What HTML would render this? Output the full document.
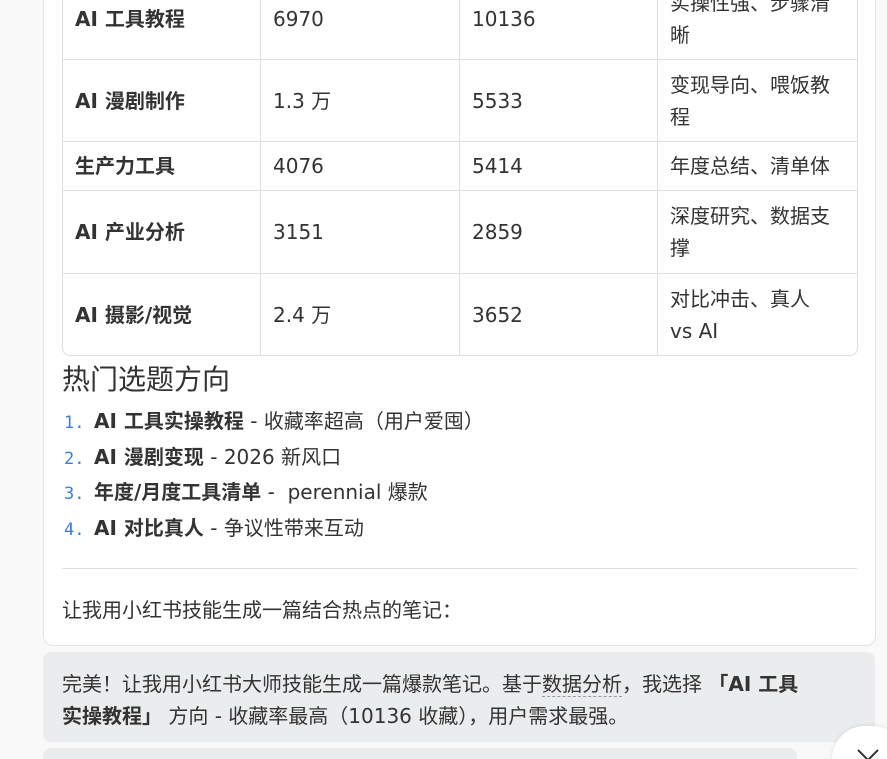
<!DOCTYPE html>
<html><head><meta charset="utf-8"><style>
*{margin:0;padding:0;box-sizing:border-box}
html,body{width:887px;height:759px;overflow:hidden}
body{background:#f9f9fa;font-family:"DejaVu Sans","Noto Sans CJK SC",sans-serif;color:#333;position:relative}
.card{position:absolute;left:43px;top:-20px;width:833px;height:666px;background:#fff;border:1px solid #e3e3e3;border-radius:0 0 10px 10px}
table{position:absolute;left:62px;top:-23px;border-collapse:separate;border-spacing:0;border:1px solid #dedede;border-radius:0 0 8px 8px;font-size:20px}
td{border-right:1px solid #dedede;border-bottom:1px solid #dedede;padding:0 12px;vertical-align:middle;line-height:32px;white-space:nowrap}
td:last-child{border-right:none}
tr:last-child td{border-bottom:none}
td.b{font-weight:bold}
h3{position:absolute;left:62px;top:362px;font-size:28px;font-weight:normal;line-height:36px}
ol{position:absolute;left:64px;top:404px;list-style:none;font-size:20px}
ol li{height:35.5px;line-height:35px;white-space:nowrap}
ol .n{font-family:"DejaVu Sans Mono",monospace;color:#3b7ddd;font-size:17px;display:inline-block;width:30px}
hr{position:absolute;left:62px;top:568px;width:795px;border:none;border-top:1px solid #e0e0e0}
.p{position:absolute;left:62px;top:594px;font-size:20px}
.g{position:absolute;left:43px;top:652px;width:832px;height:90px;background:#ebecee;border-radius:8px;padding:16px 19px;font-size:20px;line-height:32px;white-space:nowrap}
.g2{position:absolute;left:43px;top:748px;width:754px;height:11px;background:#ebecee;border-radius:8px 8px 0 0}
.c{position:absolute;left:832px;top:726px;width:74px;height:33px;border-radius:37px 37px 0 0;background:#fff;box-shadow:0 0 4px rgba(0,0,0,.12);overflow:hidden}
</style></head><body>
<div class="card"></div>
<table>
<tr style="height:82px"><td class="b" style="width:198px">AI 工具教程</td><td style="width:199px">6970</td><td style="width:198px">10136</td><td style="width:199px">实操性强、步骤清<br>晰</td></tr>
<tr style="height:82px"><td class="b">AI 漫剧制作</td><td>1.3 万</td><td>5533</td><td>变现导向、喂饭教<br>程</td></tr>
<tr style="height:49px"><td class="b">生产力工具</td><td>4076</td><td>5414</td><td>年度总结、清单体</td></tr>
<tr style="height:83px"><td class="b">AI 产业分析</td><td>3151</td><td>2859</td><td>深度研究、数据支<br>撑</td></tr>
<tr style="height:81px"><td class="b">AI 摄影/视觉</td><td>2.4 万</td><td>3652</td><td>对比冲击、真人<br>vs AI</td></tr>
</table>
<h3>热门选题方向</h3>
<ol>
<li><span class="n">1.</span><b>AI 工具实操教程</b> - 收藏率超高（用户爱囤）</li>
<li><span class="n">2.</span><b>AI 漫剧变现</b> - 2026 新风口</li>
<li><span class="n">3.</span><b>年度/月度工具清单</b> -&nbsp; perennial 爆款</li>
<li><span class="n">4.</span><b>AI 对比真人</b> - 争议性带来互动</li>
</ol>
<hr>
<div class="p">让我用小红书技能生成一篇结合热点的笔记：</div>
<div class="g">完美！让我用小红书大师技能生成一篇爆款笔记。基于<span style="border-bottom:1px dashed #999">数据分析</span>，我选择 <b>「AI 工具<br>实操教程」</b> 方向 - 收藏率最高（10136 收藏），用户需求最强。</div>
<div class="g2"></div>
<div class="c"><svg width="74" height="33" style="position:absolute;left:0;top:0"><path d="M26 24 L36 34 L46 24" fill="none" stroke="#333" stroke-width="2"/></svg></div>
</body></html>
